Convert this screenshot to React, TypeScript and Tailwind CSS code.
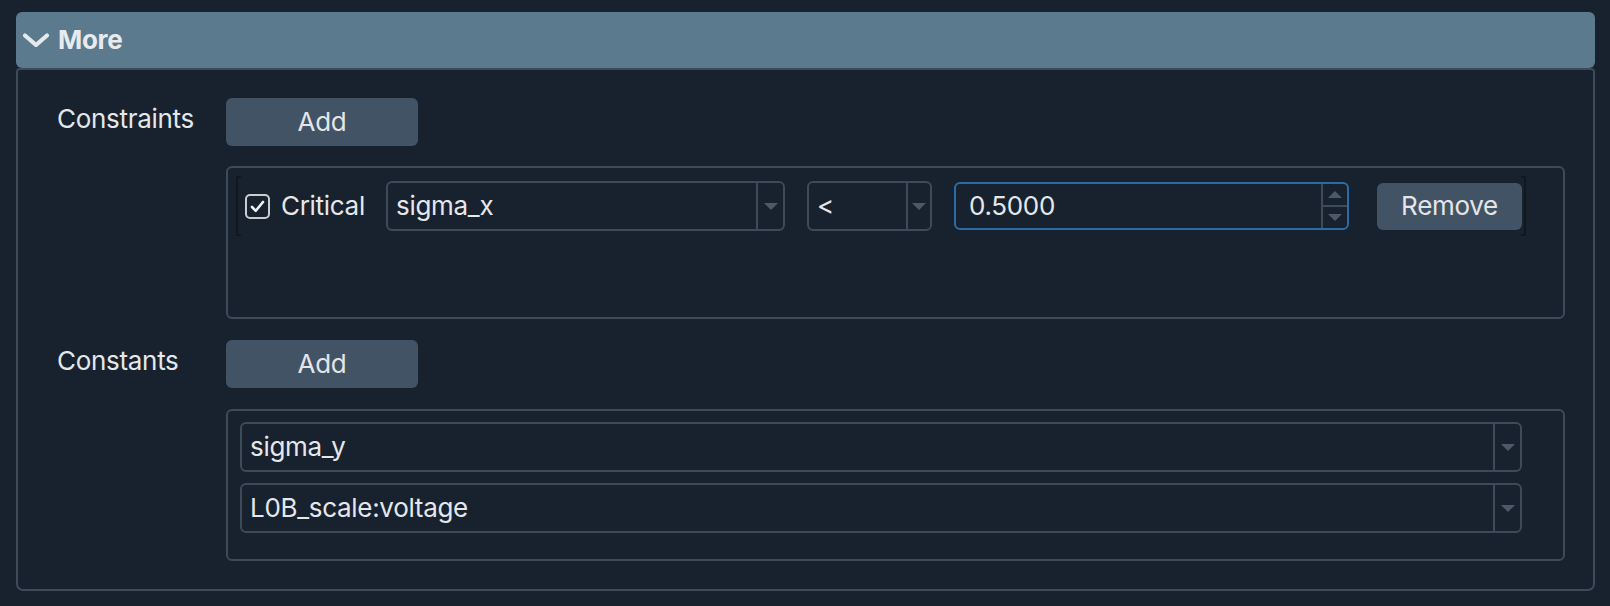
import React from 'react';

const Caret = ({ up = false }: { up?: boolean }) => (
  <svg width="14" height="7" viewBox="0 0 14 7">
    <path d={up ? 'M0 7h14L7 0z' : 'M0 0h14L7 7z'} fill="#4b5968" />
  </svg>
);

const Select = ({ value, className, arrowClass }: { value: string; className: string; arrowClass: string }) => (
  <div className={`flex h-[50px] items-stretch rounded-[6px] border-2 border-[#3c4a59] ${className}`}>
    <div className="flex flex-1 items-center pl-[8px]">{value}</div>
    <div className={`flex items-center justify-center border-l-2 border-[#3c4a59] ${arrowClass}`}>
      <Caret />
    </div>
  </div>
);

const Button = ({ label, className }: { label: string; className: string }) => (
  <button className={`flex items-center justify-center rounded-[6px] bg-[#435366] text-[#e3e5e8] ${className}`}>
    {label}
  </button>
);

export default function App() {
  return (
    <div className="h-[606px] w-full bg-[#18222e] pl-[16px] pr-[15px] pt-[12px] font-[family-name:Inter,sans-serif] text-[26px] leading-[32px] tracking-[-0.3px] text-[#e5e7ea]">
      {/* Collapsible header */}
      <div className="flex h-[56px] items-center gap-[9px] rounded-[6px] bg-[#5b7a8e] pl-[7px]">
        <svg width="26" height="14" viewBox="0 0 26 14">
          <path d="M2 2.5l11 9.5L24 2.5" fill="none" stroke="#e6e9ec" strokeWidth="4.2" strokeLinecap="round" strokeLinejoin="round" />
        </svg>
        <span className="font-bold text-[#e8ebee]">More</span>
      </div>

      <div className="h-[523px] rounded-b-[7px] rounded-t-[4px] border-2 border-[#3c4a59] pl-[39px] pr-[28px] pt-[28px]">
        {/* Constraints */}
        <div className="flex">
          <div className="w-[169px] shrink-0 pt-[5px]">Constraints</div>
          <div className="flex flex-1 flex-col">
            <Button label="Add" className="h-[48px] w-[192px]" />
            <div className="mt-[20px] h-[153px] rounded-[6px] border-2 border-[#3c4a59] pl-[8px] pt-[8px]">
              <div className="relative flex h-[60px] w-[1290px] items-center pl-[9px]">
                <span className="absolute left-0 top-0 h-full w-[5px] rounded-l-[2px] border-y-2 border-l-2 border-[#10171f]" />
                <span className="absolute right-0 top-0 h-full w-[5px] rounded-r-[2px] border-y-2 border-r-2 border-[#10171f]" />
                <div className="flex h-[25px] w-[25px] items-center justify-center rounded-[5px] border-2 border-[#c9cdd2]">
                  <svg width="15" height="13" viewBox="0 0 15 13">
                    <path d="M2 7l3.8 3.8L13 2" fill="none" stroke="#f0f2f4" strokeWidth="2.6" strokeLinecap="round" strokeLinejoin="round" />
                  </svg>
                </div>
                <span className="ml-[11px] w-[105px]">Critical</span>
                <Select value="sigma_x" className="w-[399px]" arrowClass="w-[27px]" />
                <Select value="<" className="ml-[22px] w-[125px]" arrowClass="w-[24px]" />
                <div className="ml-[22px] flex h-[48px] w-[395px] items-stretch rounded-[6px] border-2 border-[#2a6da5]">
                  <div className="flex flex-1 items-center pl-[13px]">0.5000</div>
                  <div className="flex w-[26px] flex-col border-l-2 border-[#3c4a59]">
                    <div className="flex flex-1 items-center justify-center border-b-2 border-[#3c4a59]">
                      <Caret up />
                    </div>
                    <div className="flex flex-1 items-center justify-center">
                      <Caret />
                    </div>
                  </div>
                </div>
                <Button label="Remove" className="ml-[28px] h-[47px] w-[145px]" />
              </div>
            </div>
          </div>
        </div>

        {/* Constants */}
        <div className="mt-[21px] flex">
          <div className="w-[169px] shrink-0 pt-[5px]">Constants</div>
          <div className="flex flex-1 flex-col">
            <Button label="Add" className="h-[48px] w-[192px]" />
            <div className="mt-[21px] flex h-[152px] flex-col gap-[11px] rounded-[6px] border-2 border-[#3c4a59] pl-[12px] pt-[11px]">
              <Select value="sigma_y" className="w-[1282px]" arrowClass="w-[27px]" />
              <Select value="L0B_scale:voltage" className="w-[1282px]" arrowClass="w-[27px]" />
            </div>
          </div>
        </div>
      </div>
    </div>
  );
}
